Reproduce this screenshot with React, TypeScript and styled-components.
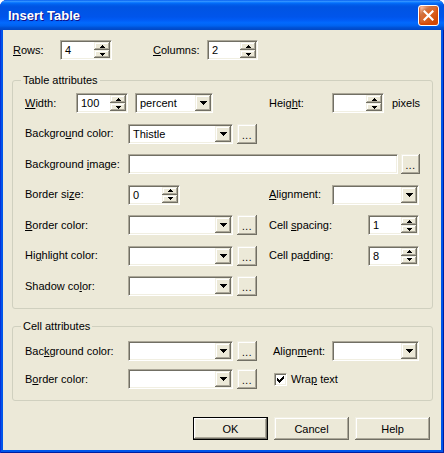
import React, { FC } from 'react';
import styled, { createGlobalStyle, css } from 'styled-components';

const GlobalStyle = createGlobalStyle`
  html, body {
    margin: 0;
    padding: 0;
    background: #ffffff;
  }
  body {
    font-family: "Liberation Sans", Arial, sans-serif;
    font-size: 11px;
    color: #000000;
  }
`;

const sunken = css`
  box-sizing: border-box;
  border: 1px solid;
  border-color: #aca899 #ffffff #ffffff #aca899;
  box-shadow: inset 1px 1px #716f64, inset -1px -1px #f1efe2;
  background: #ffffff;
`;

const raised = css`
  box-sizing: border-box;
  background: #ece9d8;
  box-shadow: inset -1px -1px #716f64, inset 1px 1px #f1efe2,
    inset -2px -2px #aca899, inset 2px 2px #ffffff;
`;

// label text with "&" before the access key
const Mnemonic: FC<{ text: string }> = ({ text }) => {
  const i = text.indexOf('&');
  if (i < 0) return <>{text}</>;
  return (
    <>
      {text.slice(0, i)}
      <Key>{text[i + 1]}</Key>
      {text.slice(i + 2)}
    </>
  );
};

const UpArrow = () => (
  <svg width="5" height="3" viewBox="0 0 5 3" shapeRendering="crispEdges">
    <path d="M2 0h1v1H2zM1 1h3v1H1zM0 2h5v1H0z" fill="#000" />
  </svg>
);

const DownArrow = () => (
  <svg width="5" height="3" viewBox="0 0 5 3" shapeRendering="crispEdges">
    <path d="M0 0h5v1H0zM1 1h3v1H1zM2 2h1v1H2z" fill="#000" />
  </svg>
);

const ComboArrow = () => (
  <svg width="7" height="4" viewBox="0 0 7 4" shapeRendering="crispEdges">
    <path d="M0 0h7v1H0zM1 1h5v1H1zM2 2h3v1H2zM3 3h1v1H3z" fill="#000" />
  </svg>
);

const Spin: FC<{ w: number; value?: string }> = ({ w, value }) => (
  <SpinBox $w={w}>
    <Value>{value}</Value>
    <SpinButtons>
      <SpinBtn>
        <UpArrow />
      </SpinBtn>
      <SpinBtn>
        <DownArrow />
      </SpinBtn>
    </SpinButtons>
  </SpinBox>
);

const Combo: FC<{ w: number; value?: string; ml?: number }> = ({ w, value, ml = 0 }) => (
  <ComboBox $w={w} $ml={ml}>
    <Value>{value}</Value>
    <DropBtn>
      <ComboArrow />
    </DropBtn>
  </ComboBox>
);

const ColorPicker: FC<{ value?: string }> = ({ value }) => (
  <>
    <Combo w={105} value={value} />
    <DotsButton $ml={4} $w={20}>...</DotsButton>
  </>
);

const App: FC = () => {
  return (
    <>
      <GlobalStyle />
      <Window>
        <TitleBar>
          <Title>Insert Table</Title>
          <CloseButton>
            <svg width="11" height="11" viewBox="0 0 11 11">
              <path d="M1.5 1.5L9.5 9.5M9.5 1.5L1.5 9.5" stroke="#fff" strokeWidth="2.2" strokeLinecap="square" />
            </svg>
          </CloseButton>
        </TitleBar>

        <Body>
          <TopRow>
            <Label $w={47}><Mnemonic text="&Rows:" /></Label>
            <Spin w={52} value="4" />
            <Label $w={54} $ml={41}><Mnemonic text="&Columns:" /></Label>
            <Spin w={51} value="2" />
          </TopRow>

          <Group $mt={20} $pt={12} $pb={12} $gap={10.5}>
            <Legend>Table attributes</Legend>
            <Row>
              <Left $w={244}>
                <Label $w={51}><Mnemonic text="&Width:" /></Label>
                <Spin w={52} value="100" />
                <Combo w={78} ml={7} value="percent" />
              </Left>
              <Right>
                <Label $w={63}><Mnemonic text="Heig&ht:" /></Label>
                <Spin w={52} />
                <Label $ml={8}>pixels</Label>
              </Right>
            </Row>
            <Row>
              <Left $w={244}>
                <Label $w={103}><Mnemonic text="Backgro&und color:" /></Label>
                <ColorPicker value="Thistle" />
              </Left>
            </Row>
            <Row>
              <Label $w={103}><Mnemonic text="Background &image:" /></Label>
              <TextBox $w={270} />
              <DotsButton $ml={3} $w={19}>...</DotsButton>
            </Row>
            <Row>
              <Left $w={244}>
                <Label $w={103}><Mnemonic text="Border si&ze:" /></Label>
                <Spin w={52} value="0" />
              </Left>
              <Right>
                <Label $w={63}><Mnemonic text="&Alignment:" /></Label>
                <Combo w={87} />
              </Right>
            </Row>
            <Row>
              <Left $w={244}>
                <Label $w={103}><Mnemonic text="&Border color:" /></Label>
                <ColorPicker />
              </Left>
              <Right>
                <Label $w={99}><Mnemonic text="Cell &spacing:" /></Label>
                <Spin w={51} value="1" />
              </Right>
            </Row>
            <Row>
              <Left $w={244}>
                <Label $w={103}><Mnemonic text="Hi&ghlight color:" /></Label>
                <ColorPicker />
              </Left>
              <Right>
                <Label $w={99}><Mnemonic text="Cell pa&dding:" /></Label>
                <Spin w={51} value="8" />
              </Right>
            </Row>
            <Row>
              <Left $w={244}>
                <Label $w={103}><Mnemonic text="Shadow co&lor:" /></Label>
                <ColorPicker />
              </Left>
            </Row>
          </Group>

          <Group $mt={17} $pt={14} $pb={11} $gap={8}>
            <Legend>Cell attributes</Legend>
            <Row>
              <Left $w={248}>
                <Label $w={103}><Mnemonic text="Bac&kground color:" /></Label>
                <ColorPicker />
              </Left>
              <Right>
                <Label $w={59}><Mnemonic text="Align&ment:" /></Label>
                <Combo w={87} />
              </Right>
            </Row>
            <Row>
              <Left $w={248}>
                <Label $w={103}><Mnemonic text="B&order color:" /></Label>
                <ColorPicker />
              </Left>
              <Right>
                <CheckBox $ml={1}>
                  <svg width="7" height="7" viewBox="0 0 7 7" shapeRendering="crispEdges">
                    <path
                      d="M6 0h1v1H6zM5 1h2v1H5zM0 2h1v1H0zM4 2h3v1H4zM0 3h2v1H0zM3 3h3v1H3zM0 4h5v1H0zM1 5h3v1H1zM2 6h1v1H2z"
                      fill="#000"
                    />
                  </svg>
                </CheckBox>
                <Label $ml={4}><Mnemonic text="Wra&p text" /></Label>
              </Right>
            </Row>
          </Group>

          <Buttons>
            <DialogButton $default>OK</DialogButton>
            <DialogButton>Cancel</DialogButton>
            <DialogButton>Help</DialogButton>
          </Buttons>
        </Body>
      </Window>
    </>
  );
};

const Window = styled.div`
  width: 444px;
  height: 453px;
  display: flex;
  flex-direction: column;
  background: #0055ea;
  border-radius: 7px 7px 0 0;
  overflow: hidden;
  box-shadow: inset 1px 0 #0831d9, inset -1px 0 #001ea0, inset 0 -1px #001ea0;
`;

const TitleBar = styled.div`
  height: 30px;
  flex: none;
  display: flex;
  align-items: center;
  justify-content: space-between;
  padding: 0 5px 0 8px;
  box-sizing: border-box;
  background: linear-gradient(
    180deg,
    #0058ee 0%,
    #3593ff 4%,
    #288eff 6%,
    #127dff 8%,
    #036ffc 10%,
    #0262ee 14%,
    #0057e5 20%,
    #0054e3 24%,
    #0055eb 56%,
    #005bf5 66%,
    #026afe 76%,
    #0062ef 86%,
    #0052d6 92%,
    #0047c4 100%
  );
`;

const Title = styled.div`
  font-family: "Liberation Sans", Arial, sans-serif;
  font-weight: 700;
  font-size: 13px;
  color: #ffffff;
  text-shadow: 1px 1px #0f1089;
  padding-top: 1px;
`;

const CloseButton = styled.div`
  width: 21px;
  height: 21px;
  box-sizing: border-box;
  border: 1px solid #ffffff;
  border-radius: 3px;
  display: flex;
  align-items: center;
  justify-content: center;
  background: radial-gradient(
    circle at 90% 90%,
    #cc4600 0%,
    #dc6527 55%,
    #cd7546 70%,
    #ffccb2 90%,
    #ffffff 100%
  );
  box-shadow: inset 0 -1px 2px 1px #da4600;
`;

const Body = styled.div`
  flex: 1;
  margin: 0 3px 3px;
  padding: 10px 8px 10px 9px;
  background: #ece9d8;
  display: flex;
  flex-direction: column;
`;

const TopRow = styled.div`
  display: flex;
  align-items: center;
  height: 20px;
  margin-left: 1px;
`;

const Group = styled.div<{ $mt: number; $pt: number; $pb: number; $gap: number }>`
  position: relative;
  margin-top: ${(p) => p.$mt}px;
  padding: ${(p) => p.$pt}px 12px ${(p) => p.$pb}px;
  border: 1px solid #d0d0bf;
  border-radius: 3px;
  display: flex;
  flex-direction: column;
  gap: ${(p) => p.$gap}px;
`;

const Legend = styled.span`
  position: absolute;
  top: -7px;
  left: 8px;
  padding: 0 2px;
  line-height: 13px;
  background: #ece9d8;
`;

const Row = styled.div`
  display: flex;
  align-items: center;
  height: 20px;
`;

const Left = styled.div<{ $w: number }>`
  display: flex;
  align-items: center;
  width: ${(p) => p.$w}px;
  flex: none;
`;

const Right = styled.div`
  display: flex;
  align-items: center;
`;

const Label = styled.span<{ $w?: number; $ml?: number }>`
  flex: none;
  width: ${(p) => (p.$w ? `${p.$w}px` : 'auto')};
  margin-left: ${(p) => p.$ml ?? 0}px;
  white-space: nowrap;
  line-height: 13px;
`;

const Key = styled.span`
  text-decoration: underline;
`;

const Value = styled.div`
  flex: 1;
  padding-left: 3px;
  line-height: 16px;
  white-space: nowrap;
  overflow: hidden;
`;

const SpinBox = styled.div<{ $w: number }>`
  ${sunken};
  flex: none;
  width: ${(p) => p.$w}px;
  height: 20px;
  padding: 1px;
  display: flex;
`;

const SpinButtons = styled.div`
  display: flex;
  flex-direction: column;
  width: 16px;
`;

const SpinBtn = styled.div`
  ${raised};
  height: 8px;
  display: flex;
  align-items: center;
  justify-content: center;
`;

const ComboBox = styled.div<{ $w: number; $ml: number }>`
  ${sunken};
  flex: none;
  width: ${(p) => p.$w}px;
  height: 20px;
  margin-left: ${(p) => p.$ml}px;
  padding: 1px;
  display: flex;
`;

const DropBtn = styled.div`
  ${raised};
  width: 16px;
  height: 16px;
  display: flex;
  align-items: center;
  justify-content: center;
`;

const TextBox = styled.div<{ $w: number }>`
  ${sunken};
  flex: none;
  width: ${(p) => p.$w}px;
  height: 20px;
`;

const DotsButton = styled.div<{ $ml: number; $w: number }>`
  ${raised};
  flex: none;
  width: ${(p) => p.$w}px;
  height: 20px;
  margin-left: ${(p) => p.$ml}px;
  display: flex;
  align-items: flex-end;
  justify-content: center;
  padding-bottom: 4px;
  line-height: 9px;
  font-size: 10px;
  letter-spacing: 0.5px;
`;

const CheckBox = styled.div<{ $ml: number }>`
  ${sunken};
  flex: none;
  width: 13px;
  height: 13px;
  margin-left: ${(p) => p.$ml}px;
  display: flex;
  align-items: center;
  justify-content: center;
`;

const Buttons = styled.div`
  display: flex;
  justify-content: flex-end;
  gap: 6px;
  margin-top: 16px;
  margin-right: 3px;
`;

const DialogButton = styled.div<{ $default?: boolean }>`
  ${raised};
  width: 75px;
  height: 23px;
  display: flex;
  align-items: center;
  justify-content: center;
  ${(p) =>
    p.$default &&
    css`
      border: 1px solid #000000;
      box-shadow: inset -1px -1px #716f64, inset 1px 1px #ffffff,
        inset -2px -2px #aca899, inset 2px 2px #f1efe2;
    `}
`;

export default App;
